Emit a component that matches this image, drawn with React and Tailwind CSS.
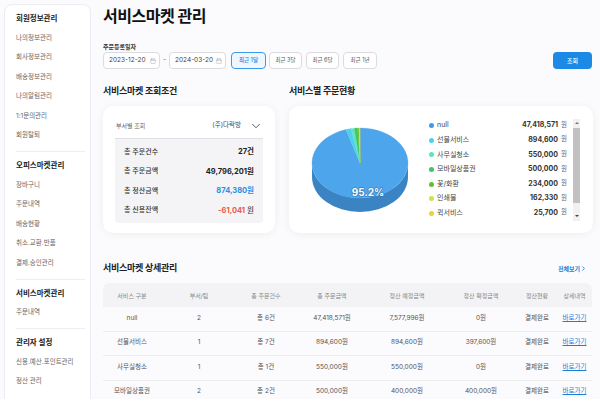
import { Calendar, ChevronDown, ChevronRight } from "lucide-react";

const sideMenu = [
  {
    title: "회원정보관리",
    items: ["나의정보관리", "회사정보관리", "배송정보관리", "나의알림관리", "1:1문의관리", "회원탈퇴"],
  },
  {
    title: "오피스마켓관리",
    items: ["장바구니", "주문내역", "배송현황", "취소.교환.반품", "결제.승인관리"],
  },
  { title: "서비스마켓관리", items: ["주문내역"] },
  { title: "관리자 설정", items: ["신용.예산.포인트관리", "정산 관리"] },
];

const legend = [
  { name: "null", value: 47418571, color: "#3f9be9", top: "#4da5ec" },
  { name: "선물서비스", value: 894600, color: "#4fd0ea", top: "#4fd0ea" },
  { name: "사무실청소", value: 550000, color: "#5fe3c5", top: "#5fe3c5" },
  { name: "모바일상품권", value: 500000, color: "#3dc664", top: "#3dc664" },
  { name: "꽃/화환", value: 234000, color: "#63bd2f", top: "#63bd2f" },
  { name: "인쇄물", value: 162330, color: "#cde24c", top: "#cde24c" },
  { name: "퀵서비스", value: 25700, color: "#f3cf3a", top: "#f3cf3a" },
];

const rows = [
  ["null", "2", "총 6건", "47,418,571원", "7,577,996원", "0원"],
  ["선물서비스", "1", "총 7건", "894,600원", "894,600원", "397,600원"],
  ["사무실청소", "1", "총 1건", "550,000원", "550,000원", "0원"],
  ["모바일상품권", "2", "총 2건", "500,000원", "400,000원", "400,000원"],
];

const headers = ["서비스 구분", "부서/팀", "총 주문건수", "총 주문금액", "정산 예정금액", "정산 확정금액", "정산현황", "상세내역"];

function Pie3D() {
  const cx = 55, cy = 41, rx = 48, ry = 35, depth = 14;
  const total = legend.reduce((s, l) => s + l.value, 0);
  const pt = (a) => [cx + rx * Math.sin(a), cy - ry * Math.cos(a)];
  let start = 0;
  const slices = legend.map((l) => {
    const sweep = (l.value / total) * Math.PI * 2;
    const [x0, y0] = pt(start);
    const [x1, y1] = pt(start + sweep);
    const large = sweep > Math.PI ? 1 : 0;
    const d = `M${cx},${cy} L${x0},${y0} A${rx},${ry} 0 ${large} 1 ${x1},${y1} Z`;
    start += sweep;
    return { d, color: l.top, name: l.name };
  });

  return (
    <svg width="110" height="95" viewBox="0 0 110 95">
      {/* side of the pie, only the front half shows */}
      <path
        d={`M${cx + rx},${cy} A${rx},${ry} 0 0 1 ${cx - rx},${cy} L${cx - rx},${cy + depth} A${rx},${ry} 0 0 0 ${cx + rx},${cy + depth} Z`}
        fill="#3b84c4"
      />
      {slices.map((s) => (
        <path key={s.name} d={s.d} fill={s.color} stroke={s.color} strokeWidth="0.3" />
      ))}
      <text
        x="63"
        y="74"
        textAnchor="middle"
        fontSize="10"
        fontWeight="700"
        fill="#fff"
        stroke="#2f6ea6"
        strokeWidth="1"
        paintOrder="stroke"
        fontFamily="Inter, sans-serif"
      >
        95.2%
      </text>
    </svg>
  );
}

export default function App() {
  return (
    <div className="flex min-h-[399px] bg-[#fbfafd] font-['Inter','Noto_Sans_CJK_KR',sans-serif] text-[#222]">
      {/* Sidebar */}
      <aside className="ml-[4px] mt-[4px] w-[87px] shrink-0 rounded-t-lg border border-[#ececf0] bg-white pl-[11px] pr-[5px] pt-[4px]">
        {sideMenu.map((group, gi) => (
          <div key={group.title}>
            {gi > 0 && <div className="mb-[4px] mt-[5px] border-t border-[#eeeef0]" />}
            <div className="flex h-[20px] items-center text-[7.5px] font-bold text-[#222]">{group.title}</div>
            {group.items.map((item) => (
              <div key={item} className="flex h-[19.5px] items-center text-[6.5px] text-[#666]">
                {item}
              </div>
            ))}
          </div>
        ))}
      </aside>

      {/* Main */}
      <main className="ml-[12px] w-[489px] pt-[5px]">
        <h1 className="h-[22px] text-[16px] font-bold leading-[22px] tracking-[-0.03em] text-[#111]">서비스마켓 관리</h1>

        <div className="mt-[16px] h-[8px] text-[6px] font-semibold leading-[8px] text-[#333]">주문등록일자</div>

        <div className="mt-[1px] flex h-[17px] items-center">
          <div className="flex h-full w-[57px] items-center justify-between rounded-[4px] border border-[#dcdce0] bg-white pl-[5px] pr-[3px] text-[6.5px] text-[#444]">
            2023-12-20
            <Calendar size={6} strokeWidth={1.6} className="text-[#999]" />
          </div>
          <span className="mx-[3px] text-[6.5px] text-[#666]">-</span>
          <div className="flex h-full w-[57px] items-center justify-between rounded-[4px] border border-[#dcdce0] bg-white pl-[5px] pr-[3px] text-[6.5px] text-[#444]">
            2024-03-20
            <Calendar size={6} strokeWidth={1.6} className="text-[#999]" />
          </div>
          <button className="ml-[5px] flex h-full w-[35px] items-center justify-center rounded-[4px] border border-[#3b9be9] bg-[#eef6fe] text-[5.5px] font-medium text-[#1f86e0]">
            최근 1달
          </button>
          <button className="ml-[3px] flex h-full w-[33px] items-center justify-center rounded-[4px] border border-[#dcdce0] bg-white text-[5.5px] text-[#555]">
            최근 3달
          </button>
          <button className="ml-[4px] flex h-full w-[33px] items-center justify-center rounded-[4px] border border-[#dcdce0] bg-white text-[5.5px] text-[#555]">
            최근 6달
          </button>
          <button className="ml-[4px] flex h-full w-[34px] items-center justify-center rounded-[4px] border border-[#dcdce0] bg-white text-[5.5px] text-[#555]">
            최근 1년
          </button>
          <button className="ml-auto flex h-full w-[39px] items-center justify-center rounded-[4px] bg-[#1b8ae6] text-[6px] font-medium text-white">
            조회
          </button>
        </div>

        {/* Two cards */}
        <div className="mt-[16px] flex gap-[14px]">
          <section className="w-[172px] shrink-0">
            <h2 className="h-[12px] text-[9px] font-bold leading-[12px] tracking-[-0.03em] text-[#222]">서비스마켓 조회조건</h2>
            <div className="mt-[9px] h-[127px] rounded-[10px] bg-white px-[12px] pt-[7px] shadow-[0_1px_8px_rgba(0,0,0,0.06)]">
              <div className="flex h-[25px] items-center pl-[1px]">
                <span className="text-[6px] text-[#666]">부서별 조회</span>
                <span className="ml-auto text-[6.5px] text-[#444]">(주)다락방</span>
                <ChevronDown size={14} strokeWidth={1.5} className="ml-[8px] text-[#444]" />
              </div>
              <div className="rounded-b-[4px] border-t border-[#e0e0e4] bg-[#f4f4f6] px-[9px] py-[3px]">
                <div className="flex h-[19.5px] items-center justify-between text-[7px]">
                  <span className="font-medium text-[#333]">총 주문건수</span>
                  <span className="text-[7.5px] font-bold text-[#222]">27건</span>
                </div>
                <div className="flex h-[19.5px] items-center justify-between text-[7px]">
                  <span className="font-medium text-[#333]">총 주문금액</span>
                  <span className="text-[7.5px] font-bold text-[#222]">49,796,201원</span>
                </div>
                <div className="flex h-[19.5px] items-center justify-between text-[7px]">
                  <span className="font-medium text-[#333]">총 정산금액</span>
                  <span className="text-[7.5px] font-bold text-[#2a8fe3]">874,380원</span>
                </div>
                <div className="flex h-[19.5px] items-center justify-between text-[7px]">
                  <span className="font-medium text-[#333]">총 신용잔액</span>
                  <span className="text-[7.5px] font-bold">
                    <span className="text-[#ea5a4c]">-61,041</span>
                    <span className="ml-[2px] font-medium text-[#444]">원</span>
                  </span>
                </div>
              </div>
            </div>
          </section>

          <section className="flex-1">
            <h2 className="h-[12px] text-[9px] font-bold leading-[12px] tracking-[-0.03em] text-[#222]">서비스별 주문현황</h2>
            <div className="mt-[9px] flex h-[127px] items-center rounded-[10px] bg-white pl-[16px] pr-[13px] shadow-[0_1px_8px_rgba(0,0,0,0.06)]">
              <Pie3D />
              <div className="ml-[14px] w-[138px]">
                {legend.map((l) => (
                  <div key={l.name} className="flex h-[14.6px] items-center">
                    <span className="h-[5px] w-[5px] rounded-full" style={{ background: l.color }} />
                    <span className="ml-[3px] text-[7px] text-[#444]">{l.name}</span>
                    <span className="ml-auto text-[7px] font-bold text-[#333]">{l.value.toLocaleString("en-US")}</span>
                    <span className="ml-[3px] text-[6.5px] text-[#666]">원</span>
                  </div>
                ))}
              </div>
              <div className="ml-[6px] flex h-[102px] w-[7px] flex-col items-center bg-[#f1f1f1]">
                <div className="flex h-[9px] items-center">
                  <div className="h-0 w-0 border-x-[2px] border-b-[2.5px] border-x-transparent border-b-[#777]" />
                </div>
                <div className="h-[75px] w-full bg-[#c1c1c1]" />
                <div className="flex-1" />
                <div className="flex h-[9px] items-center">
                  <div className="h-0 w-0 border-x-[2px] border-t-[2.5px] border-x-transparent border-t-[#444]" />
                </div>
              </div>
            </div>
          </section>
        </div>

        {/* Detail table */}
        <div className="mt-[29px] flex h-[12px] items-center justify-between">
          <h2 className="text-[9px] font-bold leading-[12px] tracking-[-0.03em] text-[#222]">서비스마켓 상세관리</h2>
          <a className="mr-[5px] flex items-center text-[6px] font-bold text-[#1a7fd6]">
            전체보기
            <ChevronRight size={7} strokeWidth={3} />
          </a>
        </div>

        <div className="mt-[9px]">
          <div className="grid h-[24px] grid-cols-[58px_76px_58px_74px_76px_72px_40px_35px] items-center rounded-t-[6px] bg-[#f3f3f5] text-center text-[6px] text-[#888]">
            {headers.map((h) => (
              <span key={h}>{h}</span>
            ))}
          </div>
          {rows.map((r) => (
            <div
              key={r[0]}
              className="grid h-[24.5px] grid-cols-[58px_76px_58px_74px_76px_72px_40px_35px] items-center border-b border-[#eeeeef] text-center text-[6.5px] text-[#555]"
            >
              {r.map((c, i) => (
                <span key={i}>{c}</span>
              ))}
              <span>결제완료</span>
              <span className="text-[#1a7fd6] underline">바로가기</span>
            </div>
          ))}
        </div>
      </main>
    </div>
  );
}
